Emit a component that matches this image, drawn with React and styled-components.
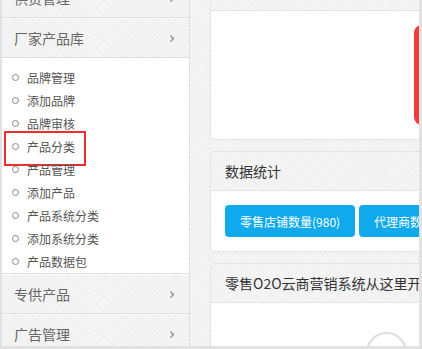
import React from "react";
import styled, { createGlobalStyle } from "styled-components";

const GlobalStyle = createGlobalStyle`
  html, body { margin:0; padding:0; background:#fff; }
  body { font-family: "Noto Sans CJK SC", "Noto Sans", sans-serif; }
  * { box-sizing:border-box; }
`;

const texture = `
  background-color:#f6f6f6;
  background-image:
    repeating-linear-gradient(45deg, rgba(0,0,0,0.018) 0 1px, transparent 1px 3px),
    repeating-linear-gradient(-45deg, rgba(0,0,0,0.018) 0 1px, transparent 1px 3px);
`;

const Frame = styled.div`
  width:422px;
  height:349px;
  display:flex;
  overflow:hidden;
  border-left:2px solid #e2e2e2;
  border-right:3px solid #e2e2e2;
  border-bottom:3px solid #e2e2e2;
  ${texture}
`;

const Sidebar = styled.div`
  width:188px;
  flex-shrink:0;
  margin-top:-22px;
  border-right:1px solid #dedede;
  background:#fff;
`;

const MenuHead = styled.div`
  height:40px;
  display:flex;
  align-items:center;
  justify-content:space-between;
  padding:0 14px 0 12px;
  font-size:14px;
  color:#666;
  border-top:1px solid #fbfbfb;
  border-bottom:1px solid #dedede;
  ${texture}
`;

const Chevron = () => (
  <svg width="6" height="9" viewBox="0 0 6 9">
    <polyline points="1.5,1.5 4.5,4.5 1.5,7.5" fill="none" stroke="#888" strokeWidth="1.2" />
  </svg>
);

const SubList = styled.ul`
  list-style:none;
  margin:0;
  padding:8px 0 0 0;
  background:#fff;
  border-bottom:1px solid #dedede;
`;

const SubItem = styled.li`
  position:relative;
  height:23px;
  display:flex;
  align-items:center;
  padding-left:10px;
  font-size:12px;
  color:#555;

  &::before {
    content:"";
    width:5px;
    height:5px;
    border:1px solid #888;
    border-radius:50%;
    margin-right:8px;
  }

  ${(p) =>
    p.$marked &&
    `
    &::after {
      content:"";
      position:absolute;
      left:2px;
      top:-4px;
      width:78px;
      height:31px;
      border:2px solid #ee2e2e;
    }
  `}
`;

const Main = styled.div`
  flex:1;
  min-width:0;
  overflow:hidden;
  padding-left:20px;
  margin-top:-29px;
`;

const Card = styled.div`
  width:420px;
  border:1px solid #e4e4e4;
  border-radius:4px;
  background:#fff;
  margin-bottom:11px;
  overflow:hidden;
`;

const CardHead = styled.div`
  height:39px;
  display:flex;
  align-items:center;
  padding-left:14px;
  font-size:14px;
  color:#333;
  white-space:nowrap;
  border-bottom:1px solid #e4e4e4;
  ${texture}
`;

const CardBody = styled.div`
  display:flex;
  gap:4px;
  padding:${(p) => p.$pad || "14px"};
`;

const RedBlock = styled.div`
  margin-left:189px;
  width:40px;
  height:100px;
  border-radius:8px;
  background:#f23b3b;
`;

const StatButton = styled.div`
  height:32px;
  padding:0 15px;
  display:flex;
  align-items:center;
  border-radius:4px;
  background:#10a9ec;
  color:#fff;
  font-size:12px;
  white-space:nowrap;
`;

const Ring = styled.div`
  margin-left:141px;
  width:41px;
  height:41px;
  border:2px solid #dcdcdc;
  border-radius:50%;
`;

const subItems = [
  "品牌管理",
  "添加品牌",
  "品牌审核",
  "产品分类",
  "产品管理",
  "添加产品",
  "产品系统分类",
  "添加系统分类",
  "产品数据包",
];

export default function App() {
  return (
    <>
      <GlobalStyle />
      <Frame>
        <Sidebar>
          <MenuHead>供货管理<Chevron /></MenuHead>
          <MenuHead>厂家产品库<Chevron /></MenuHead>
          <SubList>
            {subItems.map((t) => (
              <SubItem key={t} $marked={t === "产品分类"}>{t}</SubItem>
            ))}
          </SubList>
          <MenuHead>专供产品<Chevron /></MenuHead>
          <MenuHead>广告管理<Chevron /></MenuHead>
        </Sidebar>
        <Main>
          <Card>
            <CardHead />
            <CardBody>
              <RedBlock />
            </CardBody>
          </Card>
          <Card>
            <CardHead>数据统计</CardHead>
            <CardBody>
              <StatButton>零售店铺数量(980)</StatButton>
              <StatButton>代理商数量(56)</StatButton>
            </CardBody>
          </Card>
          <Card>
            <CardHead>零售O2O云商营销系统从这里开始</CardHead>
            <CardBody $pad="29px 14px 14px">
              <Ring />
            </CardBody>
          </Card>
        </Main>
      </Frame>
    </>
  );
}
